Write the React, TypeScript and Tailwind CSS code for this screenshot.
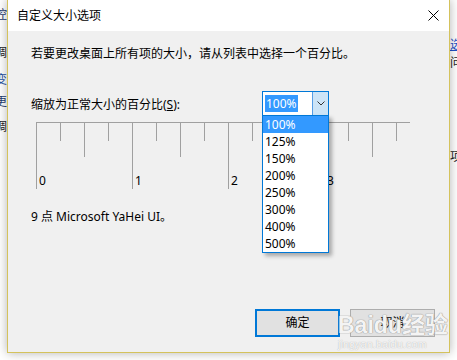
import React from 'react';

const FONT = "font-['Noto_Sans','Noto_Sans_CJK_SC',sans-serif]";

const SIZES = ['100%', '125%', '150%', '200%', '250%', '300%', '400%', '500%'];

function Ruler() {
    const ticks = Array.from({ length: 16 }, (_, k) => k);
    return (
        <svg width="374" height="68" className="block">
            <line x1="0" y1="0.5" x2="374" y2="0.5" stroke="#a0a0a0" strokeWidth="1" />
            {ticks.map(k => {
                const h = k % 4 === 0 ? 67 : k % 2 === 0 ? 35 : 19;
                return <line key={k} x1={0.5 + 24 * k} y1="0" x2={0.5 + 24 * k} y2={h} stroke="#a0a0a0" strokeWidth="1" />;
            })}
            {[0, 1, 2, 3].map(n => (
                <text key={n} x={3 + 96 * n} y="63" fontSize="12" fill="#000" fontFamily="Noto Sans, sans-serif">{n}</text>
            ))}
        </svg>
    );
}

function SizeSelect() {
    return (
        <div className="relative w-[67px] h-[25px]">
            <div className="flex h-full border border-[#0078d7] bg-white">
                <div className="flex-1 flex items-center pl-[2px]">
                    <span className="bg-[#3399ff] text-white text-[12px] leading-[17px] px-[1px]">100%</span>
                </div>
                <div className="w-[16px] h-full bg-[#cce4f7] border-l border-[#569de5] flex items-center justify-center">
                    <svg width="8" height="5" viewBox="0 0 8 5">
                        <path d="M0.5 0.5 L4 4 L7.5 0.5" fill="none" stroke="#333" strokeWidth="1" />
                    </svg>
                </div>
            </div>
            {/* open dropdown list */}
            <div className="absolute left-0 top-[24px] w-[67px] border border-[#0078d7] bg-white shadow-[3px_3px_4px_rgba(0,0,0,0.3)] z-10">
                {SIZES.map((s, i) => (
                    <div
                        key={s}
                        className={`h-[17px] pl-[2px] text-[12px] leading-[17px] ${i === 0 ? 'bg-[#3399ff] text-white' : 'text-black'}`}
                    >
                        {s}
                    </div>
                ))}
            </div>
        </div>
    );
}

export default function App() {
    return (
        <div className={`w-[457px] h-[360px] bg-white overflow-hidden relative flex ${FONT}`}>
            {/* page behind, left edge */}
            <div className="w-[7px] shrink-0 overflow-hidden text-[12px] leading-[16px]">
                <div className="-ml-[5px] flex flex-col">
                    <span className="mt-[7px] text-[#1e3a6e]">控</span>
                    <span className="mt-[22px] text-[#222]">调</span>
                    <span className="mt-[11px] text-[#1e50a0]">变</span>
                    <span className="mt-[6px] text-[#1e3a6e]">更</span>
                    <span className="mt-[9px] text-[#222]">调</span>
                </div>
            </div>

            {/* dialog */}
            <div className="w-[443px] h-[354px] -mt-[1px] shrink-0 border border-[#d4c25c] bg-[#f0f0f0] shadow-[0_0_10px_rgba(0,0,0,0.3)] flex flex-col z-10">
                <div className="h-[31px] bg-white flex items-center justify-between pl-[9px] pr-[10px]">
                    <span className="text-[12px] text-black">自定义大小选项</span>
                    <svg width="11" height="11" viewBox="0 0 11 11">
                        <path d="M0.5 0.5 L10.5 10.5 M10.5 0.5 L0.5 10.5" stroke="#000" strokeWidth="1" />
                    </svg>
                </div>

                <div className="flex-1 flex flex-col pl-[23px] pt-[15px] pr-[14px] pb-[15px] text-[12px] text-black">
                    <p className="leading-[16px]">若要更改桌面上所有项的大小，请从列表中选择一个百分比。</p>

                    <div className="flex items-center mt-[29px]">
                        <span className="w-[231px] leading-[16px] pt-[2px]">
                            缩放为正常大小的百分比(<span className="underline">S</span>):
                        </span>
                        <SizeSelect />
                    </div>

                    <div className="mt-[6px] ml-[5px]">
                        <Ruler />
                    </div>

                    <p className="mt-[19px] leading-[16px]">9 点 Microsoft YaHei UI。</p>

                    <div className="mt-auto flex justify-end gap-[10px]">
                        <button className="w-[85px] h-[28px] border-2 border-[#0078d7] bg-[#e1e1e1] text-[12px] text-black">确定</button>
                        <button className="w-[85px] h-[28px] border border-[#adadad] bg-[#e1e1e1] text-[12px] text-black">取消</button>
                    </div>
                </div>
            </div>

            {/* page behind, right edge */}
            <div className="w-[7px] shrink-0 overflow-hidden text-[12px] leading-[16px]">
                <div className="flex flex-col">
                    <span className="mt-[37px] text-[#1e50c8] underline">选</span>
                    <span className="mt-[2px] text-[#222]">问</span>
                    <span className="mt-[78px] text-[#222]">项</span>
                </div>
            </div>

            {/* watermark */}
            <div className="absolute left-[338px] top-[313px] z-20 flex flex-col pointer-events-none">
                <span className="text-[23px] leading-[25px] font-bold text-white/90 [text-shadow:0_0_1px_#8c8c8c,0_0_1px_#8c8c8c] font-['Liberation_Sans','Noto_Sans_CJK_SC',sans-serif]">Baidu经验</span>
                <span className="text-[11px] leading-[12px] text-white/90 [text-shadow:0_0_1px_#9a9a9a] font-['Liberation_Sans',sans-serif]">jingyan.baidu.com</span>
            </div>
        </div>
    );
}
